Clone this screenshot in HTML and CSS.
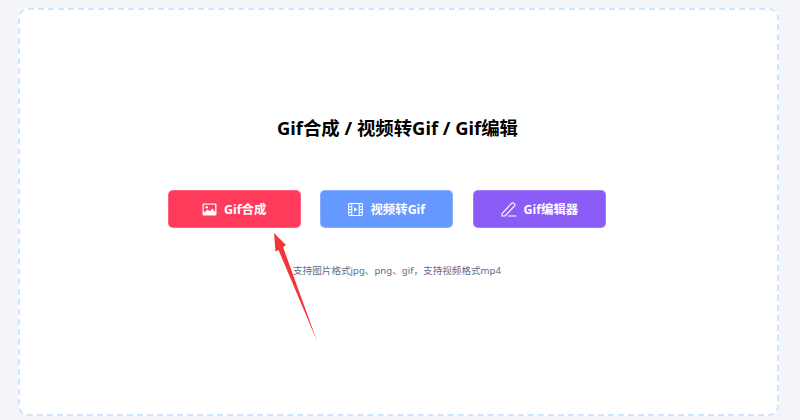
FILE: index.html
```html
<!DOCTYPE html>
<html lang="zh">
<head>
<meta charset="utf-8">
<title>Gif</title>
<link rel="stylesheet" href="styles.css">
</head>
<body>
<main class="card">
  <h1 class="title">Gif合成 / 视频转Gif / Gif编辑</h1>
  <div class="actions">
    <button class="btn btn-red">
      <svg class="icon" viewBox="0 0 16 14" fill="none"><rect x="0.5" y="0.5" width="15" height="13" rx="1.2" fill="#fff"/><rect x="1.8" y="1.8" width="12.4" height="8" fill="#ff3b5c"/><circle cx="5" cy="4.6" r="1.3" fill="#fff"/><path d="M2 10.5 6 7l2.5 2L11 6l3.2 3.6V11H2z" fill="#fff"/></svg>
      <span>Gif合成</span>
    </button>
    <button class="btn btn-blue">
      <svg class="icon" viewBox="0 0 16 14" fill="none" stroke="#fff" stroke-width="1.1"><rect x="0.6" y="0.6" width="14.8" height="12.8" rx="1"/><path d="M4 .6v12.8M12 .6v12.8M.6 4H4M.6 7H4M.6 10H4M12 4h3.4M12 7h3.4M12 10h3.4"/><path d="M6.4 4.6v4.8L10 7z" fill="#fff" stroke="none"/></svg>
      <span>视频转Gif</span>
    </button>
    <button class="btn btn-purple">
      <svg class="icon icon-pen" viewBox="0 0 16 16" fill="none" stroke="#fff" stroke-width="1.1" stroke-linejoin="round" stroke-linecap="round"><path d="M1 12.6 10.6 2.4a1.6 1.6 0 0 1 2.3 0l.5.5a1.6 1.6 0 0 1 0 2.2L4 15H1z"/><path d="M7.5 15h7.5"/></svg>
      <span>Gif编辑器</span>
    </button>
  </div>
  <p class="hint">支持图片格式jpg、png、gif，支持视频格式mp4</p>
  <svg class="arrow" viewBox="0 0 50 110" width="50" height="110"><path d="M4 0 16 12 13 14 47 108 8.5 17 5.5 18.5z" fill="#f53535"/></svg>
</main>
</body>
</html>
```
FILE: styles.css
```css
* { box-sizing: border-box; }
html, body { height: 100%; }
body {
  margin: 0;
  padding: 8px 21px 4px 18px;
  background: #f3f5fb;
  font-family: "Noto Sans", "Noto Sans CJK SC", sans-serif;
}
.card {
  position: relative;
  height: 100%;
  background: #fff;
  border: 2px dashed #cfe5ff;
  border-radius: 10px;
  display: flex;
  flex-direction: column;
  align-items: center;
  padding-top: 104px;
}
.title {
  margin: 0 2px 0 0;
  font-size: 18.4px;
  line-height: 28px;
  font-weight: 700;
  color: #000;
}
.actions {
  display: flex;
  gap: 19.4px;
  margin-top: 48px;
  padding-right: 23.4px;
}
.btn {
  width: 133.2px;
  height: 38px;
  border: 1px solid rgba(255,255,255,0.2);
  border-radius: 5px;
  color: #fff;
  font: 700 12.4px "Noto Sans", "Noto Sans CJK SC", sans-serif;
  display: flex;
  align-items: center;
  justify-content: center;
  gap: 7px;
  padding: 0;
}
.btn-red { background: #ff3b5c; }
.btn-blue { background: #6699ff; }
.btn-purple { background: #8b5cf6; }
.icon { width: 15px; height: 13px; flex: none; }
.icon-pen { width: 16px; height: 16px; }
.hint {
  margin: 34px 3px 0 0;
  font-size: 9.6px;
  line-height: 18px;
  color: #5f6b85;
}
.arrow {
  position: absolute;
  left: 250px;
  top: 223px;
}
```
